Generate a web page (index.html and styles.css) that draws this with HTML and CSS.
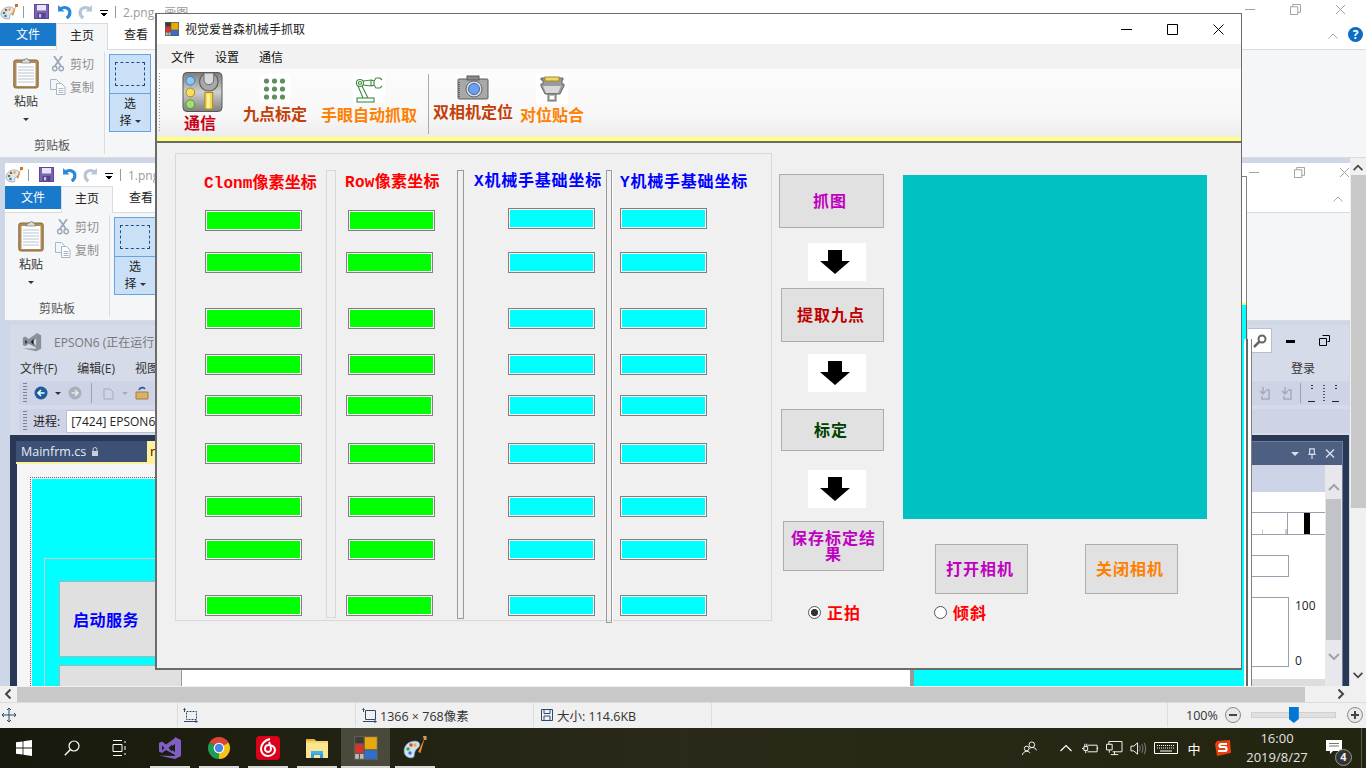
FILE: index.html
```html
<!DOCTYPE html>
<html lang="zh-CN">
<head>
  <meta charset="UTF-8">
  <title>视觉爱普森机械手抓取</title>
  <link rel="stylesheet" href="styles.css">
</head>
<body>

  <!-- Iconos reutilizados -->
  <svg class="defs" xmlns="http://www.w3.org/2000/svg">
    <symbol id="i-paint" viewBox="0 0 18 18">
      <path d="M1 11c0-4 4-7 8-7 4 0 6 2 5 5-1 2-3 1-4 3s1 4-2 4c-4 0-7-2-7-5z" fill="#dfe8ee" stroke="#7f97a8" stroke-width=".7"/>
      <circle cx="4" cy="10" r="1.300" fill="#3c8f3c"/><circle cx="6" cy="7" r="1.300" fill="#d94040"/><circle cx="9.500" cy="6.500" r="1.300" fill="#e0b030"/><circle cx="5.500" cy="13" r="1.300" fill="#3b78c8"/>
      <path d="M16.500 1l-5 11 1.800.8z" fill="#e88a2c"/><path d="M15 1h3v3h-3z" fill="#c9742a"/>
    </symbol>
    <symbol id="i-save" viewBox="0 0 15 15">
      <rect x=".5" y=".5" width="14" height="14" fill="#7a62b8" stroke="#5c4796"/>
      <rect x="3" y="1" width="9" height="5.500" fill="#e9e6f2"/><rect x="3.500" y="9" width="8" height="5.500" fill="#56458c"/><rect x="5" y="10" width="2.200" height="3.500" fill="#c9c3dc"/>
    </symbol>
    <symbol id="i-undo" viewBox="0 0 14 14">
      <path d="M1 1v6h6z" fill="currentColor"/><path d="M3 5c3-3 9-2 9 3 0 2-1 4-3 5" fill="none" stroke="currentColor" stroke-width="3"/>
    </symbol>
    <symbol id="i-clip" viewBox="0 0 26 32">
      <rect x=".8" y="3" width="24.400" height="28" rx="2" fill="#b08a58" stroke="#8a6a3c"/>
      <rect x="3.500" y="6" width="19" height="23" fill="#fff"/>
      <path d="M5 10h16M5 13h16M5 16h16M5 19h16M5 22h16M5 25h16" stroke="#b9c4d2"/>
      <path d="M8 6l2-3h2a1.500 1.500 0 0 1 3 0h1l2 3z" fill="#dcdcdc" stroke="#666" stroke-width=".6"/>
    </symbol>
    <symbol id="i-cut" viewBox="0 0 12 16">
      <path d="M2 0l7 10M10 0L3 10" stroke="#9aa8bb" stroke-width="1.800" fill="none"/>
      <circle cx="2.800" cy="12.500" r="2.200" fill="none" stroke="#9aa8bb" stroke-width="1.400"/><circle cx="9.200" cy="12.500" r="2.200" fill="none" stroke="#9aa8bb" stroke-width="1.400"/>
    </symbol>
    <symbol id="i-copy" viewBox="0 0 16 16">
      <path d="M.5.5h6l3 3v7h-9z" fill="#f2f5f9" stroke="#a9b6c6"/><path d="M6.500 4.500h5l3.500 3.500v7.500h-8.500z" fill="#fff" stroke="#a9b6c6"/><path d="M8.500 9.500h5M8.500 11.500h5M8.500 13.500h5" stroke="#a9b6c6"/>
    </symbol>
    <symbol id="i-tile" viewBox="0 0 20 20">
      <rect width="20" height="20" fill="#5c5c50"/>
      <rect x="9" y="1" width="10" height="10" fill="#e9a80e"/><rect x="9" y="12" width="10" height="7" fill="#2f6fd0"/>
      <rect x="1" y="7" width="7" height="7" fill="#d8332e"/><rect x="1" y="1" width="7" height="5" fill="#3c3c34"/><rect x="1" y="15" width="3" height="4" fill="#bbb"/><rect x="5" y="15" width="3" height="4" fill="#bbb"/>
    </symbol>
    <symbol id="i-arrow" viewBox="0 0 30 24">
      <path d="M8 0h14v11h8L15 24 0 11h8z" fill="#000"/>
    </symbol>
    <symbol id="i-vs" viewBox="0 0 24 24">
      <path d="M17 1l6 3v16l-6 3L1 19.500l16 .5V1z" fill="currentColor"/>
      <path d="M1 7l3-1.500 4 3L17 2v6l-6 4 6 4v3l-9-5-4 3-3-1.500z" fill="currentColor"/>
      <path d="M4 9.500v5l2.500-2.500zM14 8.500L10.500 12l3.500 3.500z" fill="#1d2113"/>
    </symbol>
  </svg>

  <div class="workspace">

    <!-- Ventana de fondo: 2.png -->
    <div class="paint paint-top">
      <div class="paint-title">
        <svg class="ic-paint"><use href="#i-paint"/></svg>
        <i class="qa-sep"></i>
        <svg class="ic-qa"><use href="#i-save"/></svg>
        <svg class="ic-qa undo"><use href="#i-undo"/></svg>
        <svg class="ic-qa redo"><use href="#i-undo"/></svg>
        <span class="qa-drop"></span>
        <i class="qa-sep"></i>
        <span class="doc-name">2.png - 画图</span>
        <span class="win-btns">
          <svg class="wb" viewBox="0 0 12 12"><path d="M0 6h11" stroke="#999"/></svg>
          <svg class="wb" viewBox="0 0 12 12"><path d="M.5 3h8v8.500h-8zM3 3V.500h8.500V9H8.500" fill="none" stroke="#999"/></svg>
          <svg class="wb" viewBox="0 0 12 12"><path d="M1 1l10 10M11 1L1 11" stroke="#999"/></svg>
        </span>
      </div>
      <div class="paint-tabs">
        <span class="tab tab-file">文件</span>
        <span class="tab tab-on">主页</span>
        <span class="tab tab-view">查看</span>
        <svg class="rib-chevron" viewBox="0 0 10 6"><path d="M.5 5.500L5 1l4.500 4.500" fill="none" stroke="#aaa"/></svg>
        <span class="rib-help">?</span>
      </div>
      <div class="ribbon">
        <div class="rib-group">
          <div class="rib-row">
            <div class="paste">
              <svg class="ic-clip"><use href="#i-clip"/></svg>
              <span>粘贴</span>
              <b class="caret"></b>
            </div>
            <div class="cut-copy">
              <span><svg class="ic-sm"><use href="#i-cut"/></svg>剪切</span>
              <span><svg class="ic-sm"><use href="#i-copy"/></svg>复制</span>
            </div>
          </div>
          <div class="rib-label">剪贴板</div>
        </div>
        <div class="select-btn">
          <div class="select-top"><i></i></div>
          <div class="select-low">选<br>择 <b class="caret"></b></div>
        </div>
      </div>
    </div>

    <!-- Ventana de fondo: 1.png -->
    <div class="paint paint-second">
      <div class="paint-title">
        <svg class="ic-paint"><use href="#i-paint"/></svg>
        <i class="qa-sep"></i>
        <svg class="ic-qa"><use href="#i-save"/></svg>
        <svg class="ic-qa undo"><use href="#i-undo"/></svg>
        <svg class="ic-qa redo"><use href="#i-undo"/></svg>
        <span class="qa-drop"></span>
        <i class="qa-sep"></i>
        <span class="doc-name">1.png - 画图</span>
        <span class="win-btns">
          <svg class="wb" viewBox="0 0 12 12"><path d="M0 6h11" stroke="#999"/></svg>
          <svg class="wb" viewBox="0 0 12 12"><path d="M.5 3h8v8.500h-8zM3 3V.500h8.500V9H8.500" fill="none" stroke="#999"/></svg>
          <svg class="wb" viewBox="0 0 12 12"><path d="M1 1l10 10M11 1L1 11" stroke="#999"/></svg>
        </span>
      </div>
      <div class="paint-tabs">
        <span class="tab tab-file">文件</span>
        <span class="tab tab-on">主页</span>
        <span class="tab tab-view">查看</span>
        <svg class="rib-chevron" viewBox="0 0 10 6"><path d="M.5 5.500L5 1l4.500 4.500" fill="none" stroke="#aaa"/></svg>
      </div>
      <div class="ribbon">
        <div class="rib-group">
          <div class="rib-row">
            <div class="paste">
              <svg class="ic-clip"><use href="#i-clip"/></svg>
              <span>粘贴</span>
              <b class="caret"></b>
            </div>
            <div class="cut-copy">
              <span><svg class="ic-sm"><use href="#i-cut"/></svg>剪切</span>
              <span><svg class="ic-sm"><use href="#i-copy"/></svg>复制</span>
            </div>
          </div>
          <div class="rib-label">剪贴板</div>
        </div>
        <div class="select-btn">
          <div class="select-top"><i></i></div>
          <div class="select-low">选<br>择 <b class="caret"></b></div>
        </div>
      </div>
    </div>

    <!-- Visual Studio -->
    <div class="vs">
      <div class="vs-head">
        <div class="vs-title">
          <svg class="vs-logo"><use href="#i-vs"/></svg>
          <span>EPSON6 (正在运行)</span>
          <span class="vs-search">
            <svg viewBox="0 0 14 14"><circle cx="9" cy="5" r="3.500" fill="none" stroke="#666" stroke-width="2"/><path d="M6.500 7.500L1 13" stroke="#666" stroke-width="2.500"/></svg>
          </span>
          <b class="vs-min"></b>
          <svg class="vs-rest" viewBox="0 0 11 11"><path d="M3.500.5h7v6h-2M.5 3.500h7v7h-7z" fill="#d6dbe9" stroke="#000"/></svg>
        </div>
        <div class="vs-menu">
          <span>文件(F)</span><span>编辑(E)</span><span>视图</span>
          <span class="vs-login">登录</span>
        </div>
        <div class="vs-tools">
          <i class="grip"></i>
          <svg viewBox="0 0 14 14"><circle cx="7" cy="7" r="6.500" fill="#1b5d9c"/><path d="M10.500 7h-6M7 4L4 7l3 3" fill="none" stroke="#fff" stroke-width="1.600"/></svg>
          <b class="mini-caret"></b>
          <svg viewBox="0 0 14 14"><circle cx="7" cy="7" r="6.500" fill="#aab0ba"/><path d="M3.500 7h6M7 4l3 3-3 3" fill="none" stroke="#e8e8e8" stroke-width="1.600"/></svg>
          <i class="tool-sep"></i>
          <svg viewBox="0 0 14 14"><path d="M3 3h6l3 3v7H3z" fill="none" stroke="#a6abb8"/></svg>
          <b class="mini-caret pale"></b>
          <svg viewBox="0 0 14 14"><path d="M1 6h12v7H1z" fill="#d9b26a" stroke="#a27f3a"/><path d="M4 4c1-3 5-3 6-1" fill="none" stroke="#1b5d9c" stroke-width="1.600"/></svg>
          <span class="vs-tools-right">
            <svg viewBox="0 0 14 14"><path d="M6 1v7M3 5l3 3 3-3M9 4h3v9H5v-3" fill="none" stroke="#a6abb8" stroke-width="1.500"/></svg>
            <svg class="second-down" viewBox="0 0 14 14"><path d="M6 1v7M3 5l3 3 3-3M9 4h3v9H5v-3" fill="none" stroke="#a6abb8" stroke-width="1.500"/></svg>
            <i class="tool-sep"></i>
            <em class="tick"></em><em class="tick dim"></em><em class="tick"></em>
          </span>
        </div>
        <div class="vs-proc">
          <i class="grip"></i>
          <span>进程:</span>
          <span class="proc-box">[7424] EPSON6</span>
        </div>
      </div>
      <div class="vs-dark">
        <div class="doc-tabs">
          <span class="doc-tab">Mainfrm.cs<svg viewBox="0 0 8 10"><path d="M2 4V2.500a2 2 0 0 1 4 0V4" fill="none" stroke="#ccd"/><rect x="1" y="4" width="6" height="5" fill="#ccd"/></svg></span>
          <span class="doc-tab2">r</span>
        </div>
        <div class="doc-pane">
          <div class="form-shot">
            <div class="inner-frame">
              <div class="old-btn"><span>启动服务</span></div>
              <div class="old-btn low"></div>
            </div>
            <div class="white-panel"></div>
          </div>
        </div>
        <div class="side-panel">
          <div class="side-head">
            <b class="side-caret"></b>
            <svg viewBox="0 0 10 12"><path d="M2.500 1h5v6h-5zM1 7h8M5 7v5" fill="none" stroke="#dde" stroke-width="1.300"/></svg>
            <svg viewBox="0 0 10 10"><path d="M1 1l8 8M9 1L1 9" stroke="#dde" stroke-width="1.400"/></svg>
          </div>
          <div class="side-body">
            <div class="side-main">
              <div class="side-band"></div>
              <div class="side-ruler"><i></i></div>
              <div class="side-box"></div>
              <div class="side-level"><div class="side-graph"></div><div class="side-nums"><span>100</span><span>0</span></div></div>
            </div>
            <div class="side-scroll">
              <svg viewBox="0 0 12 8"><path d="M1 7l5-5 5 5" fill="none" stroke="#9fa3ad" stroke-width="2"/></svg>
              <i></i>
              <svg viewBox="0 0 12 8"><path d="M1 1l5 5 5-5" fill="none" stroke="#9fa3ad" stroke-width="2"/></svg>
            </div>
          </div>
        </div>
      </div>
    </div>

    <!-- Restos de otra ventana detras del formulario -->
    <div class="ghost ghost-up"></div>
    <div class="ghost ghost-mid"></div>
    <div class="ghost ghost-low"></div>

    <div class="vscroll">
      <svg viewBox="0 0 12 8"><path d="M1 7l5-5 5 5" fill="none" stroke="#444" stroke-width="2"/></svg>
      <i></i>
      <svg viewBox="0 0 12 8"><path d="M1 1l5 5 5-5" fill="none" stroke="#444" stroke-width="2"/></svg>
    </div>

    <!-- Formulario principal -->
    <div class="form-win">
      <div class="form-title">
        <svg class="form-ico"><use href="#i-tile"/></svg>
        <span>视觉爱普森机械手抓取</span>
        <span class="form-btns">
          <svg viewBox="0 0 11 11"><path d="M0 5.500h11" stroke="#000"/></svg>
          <svg viewBox="0 0 11 11"><path d="M.5.5h10v10H.5z" fill="none" stroke="#000"/></svg>
          <svg viewBox="0 0 11 11"><path d="M.5.5l10 10M10.500.5l-10 10" stroke="#000"/></svg>
        </span>
      </div>
      <div class="form-menu"><span>文件</span><span>设置</span><span>通信</span></div>
      <div class="form-tools">
        <i class="tools-grip"></i>
        <div class="tool tool-comm">
          <svg class="t-comm" viewBox="0 0 41 41">
            <defs>
              <linearGradient id="gr-comm" x1="0" y1="0" x2="0" y2="1"><stop offset="0" stop-color="#7c7c7c"/><stop offset=".5" stop-color="#cfcfcf"/><stop offset="1" stop-color="#7f7f7f"/></linearGradient>
            </defs>
            <rect x=".5" y=".5" width="40" height="40" rx="4" fill="url(#gr-comm)" stroke="#555"/>
            <circle cx="8" cy="9" r="4.500" fill="#8cc6f2" stroke="#3a7db8"/>
            <circle cx="8" cy="21" r="4.500" fill="#f7dc60" stroke="#a58a20"/>
            <circle cx="8" cy="33" r="4.500" fill="#9fe070" stroke="#559030"/>
            <circle cx="27" cy="10" r="9.500" fill="#a8a8a8" stroke="#5c5c5c" stroke-width="1.200"/>
            <path d="M22 1v7a5 5 0 0 0 10 0V1z" fill="#dadada" stroke="#666"/>
            <rect x="23" y="21" width="8" height="17" fill="#f8d848" stroke="#a58a20"/>
            <rect x="25" y="22" width="3" height="15" fill="#fff3a8"/>
          </svg>
          <span class="t-red t-comm-label">通信</span>
        </div>
        <div class="tool tool-nine">
          <svg class="t-box" viewBox="0 0 31 29">
            <rect width="31" height="29" fill="#fff"/>
            <g fill="#5f8f5f">
              <circle cx="7" cy="7" r="2.600"/><circle cx="15" cy="7" r="2.600"/><circle cx="23" cy="7" r="2.600"/>
              <circle cx="7" cy="15" r="2.600"/><circle cx="15" cy="15" r="2.600"/><circle cx="23" cy="15" r="2.600"/>
              <circle cx="7" cy="23" r="2.600"/><circle cx="15" cy="23" r="2.600"/><circle cx="23" cy="23" r="2.600"/>
            </g>
          </svg>
          <span class="t-rust">九点标定</span>
        </div>
        <div class="tool tool-hand">
          <svg class="t-box" viewBox="0 0 32 29">
            <rect width="32" height="29" fill="#fff"/>
            <g fill="none" stroke="#3f8a3f" stroke-width="1.100">
              <circle cx="7" cy="9" r="3.500"/><circle cx="7" cy="9" r="1.500"/>
              <path d="M10 7l8-1v6l-8-1M18 6l3 1v4l-3 1"/>
              <path d="M21 7l2-3h4l2 2M21 11l2 3h4l2-2"/>
              <path d="M5 12l5 12M9 12l6 12"/>
              <rect x="4" y="24" width="17" height="4"/>
            </g>
          </svg>
          <span class="t-orange">手眼自动抓取</span>
        </div>
        <i class="tool-line"></i>
        <div class="tool tool-cam">
          <svg class="t-cam" viewBox="0 0 34 25">
            <rect width="34" height="25" fill="#fff"/>
            <rect x="2" y="4" width="30" height="20" rx="1" fill="#a8a8a8" stroke="#5a5a5a"/>
            <rect x="11" y="1" width="12" height="4" fill="#8a8a8a" stroke="#5a5a5a"/>
            <circle cx="18" cy="14" r="8" fill="#ddd" stroke="#666"/>
            <circle cx="18" cy="14" r="5.500" fill="#6fa0f0" stroke="#3868b8"/>
            <path d="M3 7v15" stroke="#666" stroke-dasharray="1 1" stroke-width="2"/>
          </svg>
          <span class="t-rust">双相机定位</span>
        </div>
        <div class="tool tool-port">
          <svg class="t-box" viewBox="0 0 32 30">
            <rect width="32" height="30" fill="#fff"/>
            <path d="M5 4h22v2h-1v4h2v2l-4 8H9l-4-8v-2h2V6H5z" fill="#9a9a9a" stroke="#666"/>
            <rect x="9" y="3" width="14" height="4" fill="#f0d870" stroke="#a58a20"/>
            <path d="M7 12h18l-3 7H10z" fill="#d8d8d8"/>
            <rect x="12" y="20" width="8" height="7" fill="#bbb" stroke="#666"/>
            <rect x="14" y="22" width="4" height="3" fill="#fff"/>
          </svg>
          <span class="t-orange">对位贴合</span>
        </div>
      </div>
      <div class="form-rule"></div>

      <div class="form-body">
        <!-- Tabla de coordenadas -->
        <div class="coord-group">
          <i class="vbar bar-1"></i>
          <i class="vbar bar-2"></i>
          <i class="vbar bar-3"></i>

          <div class="col-title c1 red t-clonm">Clonm像素坐标</div>
          <div class="col-title c2 red t-row">Row像素坐标</div>
          <div class="col-title c3 blue t-x">X机械手基础坐标</div>
          <div class="col-title c4 blue t-y">Y机械手基础坐标</div>

          <div class="field green c1 down"></div><div class="field green c2 down"></div><div class="field cyan c3"></div><div class="field cyan c4"></div>
          <div class="field green c1"></div><div class="field green c2 left"></div><div class="field cyan c3"></div><div class="field cyan c4"></div>
          <div class="field green c1"></div><div class="field green c2"></div><div class="field cyan c3"></div><div class="field cyan c4"></div>
          <div class="field green c1"></div><div class="field green c2"></div><div class="field cyan c3"></div><div class="field cyan c4"></div>
          <div class="field green c1"></div><div class="field green c2 left"></div><div class="field cyan c3"></div><div class="field cyan c4"></div>
          <div class="field green c1"></div><div class="field green c2"></div><div class="field cyan c3"></div><div class="field cyan c4"></div>
          <div class="field green c1"></div><div class="field green c2"></div><div class="field cyan c3"></div><div class="field cyan c4"></div>
          <div class="field green c1"></div><div class="field green c2"></div><div class="field cyan c3"></div><div class="field cyan c4"></div>
          <div class="field green c1"></div><div class="field green c2 left"></div><div class="field cyan c3"></div><div class="field cyan c4"></div>
        </div>

        <!-- Pasos de calibracion -->
        <div class="steps">
          <button class="btn step-grab purple">抓图</button>
          <div class="arrow-box a1"><svg><use href="#i-arrow"/></svg></div>
          <button class="btn step-nine dred">提取九点</button>
          <div class="arrow-box a2"><svg><use href="#i-arrow"/></svg></div>
          <button class="btn step-cal dgreen">标定</button>
          <div class="arrow-box a3"><svg><use href="#i-arrow"/></svg></div>
          <button class="btn step-save purple">保存标定结果</button>
          <label class="radio r-front"><i class="dot on"></i>正拍</label>
        </div>

        <!-- Camara -->
        <div class="camera">
          <div class="preview"></div>
          <div class="cam-btns">
            <button class="btn cam-btn purple">打开相机</button>
            <button class="btn cam-btn orange">关闭相机</button>
          </div>
          <label class="radio r-tilt"><i class="dot"></i>倾斜</label>
        </div>
      </div>
    </div>
  </div>

  <div class="hscroll">
    <svg viewBox="0 0 8 12"><path d="M6.500 1.500L2 6l4.500 4.500" fill="none" stroke="#444" stroke-width="2"/></svg>
    <i></i>
    <svg viewBox="0 0 8 12"><path d="M1.500 1.500L6 6l-4.500 4.500" fill="none" stroke="#444" stroke-width="2"/></svg>
  </div>

  <div class="status">
    <div class="st st-1">
      <svg viewBox="0 0 14 14"><path d="M7 0v14M0 7h14M5 2l2-2 2 2M5 12l2 2 2-2M2 5L0 7l2 2M12 5l2 2-2 2" fill="none" stroke="#2c4a6e"/></svg>
    </div>
    <div class="st st-2">
      <svg viewBox="0 0 15 15"><path d="M3.500 3.500h10v8h-10z" fill="none" stroke="#2c4a6e" stroke-dasharray="2 1"/><path d="M1.500 4V.5M.5 2l1-1.500L2.500 2M1 13.500h13M12.500 12.500l2 1-2 1" fill="none" stroke="#2c4a6e"/></svg>
    </div>
    <div class="st st-3">
      <svg viewBox="0 0 15 15"><path d="M3.500 2.500h10v9h-10z" fill="none" stroke="#2c4a6e"/><path d="M1.500 4V.5M.5 2l1-1.500L2.500 2M1 13.500h13M12.500 12.500l2 1-2 1" fill="none" stroke="#2c4a6e"/></svg>
      <span>1366 × 768像素</span>
    </div>
    <div class="st st-4">
      <svg viewBox="0 0 12 12"><path d="M.5.5h11v11H.5zM3 .5v4h6v-4M3 11.500V7h6v4.500" fill="none" stroke="#2c4a6e"/></svg>
      <span>大小: 114.6KB</span>
    </div>
    <div class="st st-5"></div>
    <div class="st st-zoom">
      <span>100%</span>
      <svg class="zoom-btn" viewBox="0 0 16 16"><circle cx="8" cy="8" r="7.500" fill="#e8e8e8" stroke="#8a8a8a"/><path d="M4 8h8" stroke="#444" stroke-width="2"/></svg>
      <div class="slider"><i></i></div>
      <svg class="zoom-btn" viewBox="0 0 16 16"><circle cx="8" cy="8" r="7.500" fill="#e8e8e8" stroke="#8a8a8a"/><path d="M4 8h8M8 4v8" stroke="#444" stroke-width="2"/></svg>
    </div>
  </div>

  <div class="taskbar">
    <div class="task nar"><svg viewBox="0 0 16 16"><path d="M0 2.300l6.600-.9v6.200H0zM7.400 1.300L16 0v7.600H7.400zM0 8.400h6.600v6.200L0 13.700zM7.400 8.400H16V16l-8.600-1.300z" fill="#fff"/></svg></div>
    <div class="task nar"><svg viewBox="0 0 16 16"><circle cx="10" cy="6" r="5" fill="none" stroke="#fff" stroke-width="1.200"/><path d="M6.500 9.500L.8 15.200" stroke="#fff" stroke-width="1.400"/></svg></div>
    <div class="task nar"><svg viewBox="0 0 16 16"><path d="M1 .5h9M1 15.500h9M1 4.500h9v7H1zM13 1v2M13 6v4M13 13v2" fill="none" stroke="#fff"/></svg></div>
    <div class="task tvs open"><svg><use href="#i-vs"/></svg></div>
    <div class="task open">
      <svg viewBox="0 0 24 24">
        <path d="M12 12L2.470 6.500A11 11 0 0 1 21.530 6.500z" fill="#dd4438"/>
        <path d="M12 12L21.530 6.500A11 11 0 0 1 12 23z" fill="#f6c21c"/>
        <path d="M12 12L12 23A11 11 0 0 1 2.470 6.500z" fill="#1f9d55"/>
        <circle cx="12" cy="12" r="5.300" fill="#fff"/><circle cx="12" cy="12" r="4.200" fill="#4a86e8"/>
      </svg>
    </div>
    <div class="task open">
      <svg viewBox="0 0 24 24"><rect width="24" height="24" rx="4" fill="#dd001b"/><path d="M14 3c-5 1-9 5-9 10 0 4 3 7 7 7s7-3 7-6-3-5-6-5-4 2-4 4 2 3 3 3 3-1 3-3c0-3-1-5-2-7" fill="none" stroke="#fff" stroke-width="2"/></svg>
    </div>
    <div class="task open">
      <svg viewBox="0 0 24 24"><path d="M1 3h8l2 2h12v17H1z" fill="#f5d76e"/><path d="M1 3h8l2 2H1z" fill="#e0b53c"/><path d="M4 7h19v15H1V7z" fill="#fbe58e"/><path d="M6 22v-6h12v6h-3v-3H9v3z" fill="#2f9ee0"/><rect x="6" y="15" width="12" height="3" fill="#3fb2ee"/></svg>
    </div>
    <div class="task active"><svg><use href="#i-tile"/></svg></div>
    <div class="task open">
      <svg viewBox="0 0 24 24">
        <path d="M1 15c0-6 5-10 11-10 4 0 6 3 4 6-2 2-3 2-4 5s0 6-4 6c-4 0-7-3-7-7z" fill="#cfe2ef" stroke="#5f88a6" stroke-width=".6"/>
        <circle cx="5" cy="13" r="1.700" fill="#38a838"/><circle cx="8" cy="9" r="1.700" fill="#dd4040"/><circle cx="12" cy="9" r="1.700" fill="#e9b530"/><circle cx="7" cy="17" r="1.700" fill="#2f78d0"/>
        <path d="M22 1l-7 15 2.500 1z" fill="#e0862c"/><path d="M20 0h3.500v4H21z" fill="#caa060"/>
      </svg>
    </div>

    <div class="tray">
      <span class="tr-people"><svg viewBox="0 0 16 16"><circle cx="10.500" cy="4" r="3" fill="none" stroke="#fff"/><circle cx="5" cy="8" r="2.500" fill="none" stroke="#fff"/><path d="M.5 15c0-2 2-4 4.500-4s3 1 3.500 2M8 8c1-1 2-1 3-1 2 0 4 1 4.500 3" fill="none" stroke="#fff"/></svg></span>
      <span class="tr-up"><svg viewBox="0 0 12 8"><path d="M.5 7L6 1.500 11.500 7" fill="none" stroke="#fff" stroke-width="1.200"/></svg></span>
      <span class="tr"><svg viewBox="0 0 18 14"><path d="M6 3.500h10v7H6M16.500 6v2M2 5h4v4H2zM0 7h2M3 5V2M5 5V2M4 9v3" fill="none" stroke="#fff"/></svg></span>
      <span class="tr"><svg viewBox="0 0 18 16"><path d="M3 3.500V.5h14v11H7M.5 3.500h6v6h-6zM3.500 9.500v3M9 11.500v3M5 14.500h8" fill="none" stroke="#fff"/></svg></span>
      <span class="tr"><svg viewBox="0 0 18 14"><path d="M1 4.500h3L8 1v12L4 9.500H1z" fill="none" stroke="#fff"/><path d="M10 4c1 2 1 4 0 6M12.500 2.500c1.500 3 1.500 6 0 9M15 1c2 4 2 8 0 12" fill="none" stroke="#888"/></svg></span>
      <span class="tr-keys"><svg viewBox="0 0 24 12"><path d="M.5.5h23v11H.5z" fill="none" stroke="#fff"/><path d="M3 3.500h18M3 6h18" stroke="#fff" stroke-dasharray="1 1"/><path d="M6 9h12" stroke="#fff"/></svg></span>
      <span class="tr-ime">中</span>
      <span class="tr-sogou"><svg viewBox="0 0 16 16"><path d="M2 1l13-1 1 13-14 3-2-12z" fill="#e8400c"/><path d="M12 4H6C4 4 4 7 6 7h4c2 0 2 4 0 4H3" fill="none" stroke="#fff" stroke-width="2.200"/></svg></span>
      <span class="clock"><span>16:00</span><span>2019/8/27</span></span>
      <span class="notif">
        <svg viewBox="0 0 16 16"><path d="M0 0h16v11H7l-3 3v-3H0z" fill="#fff"/><path d="M3 3.500h10M3 6h10" stroke="#777"/></svg>
        <em>4</em>
      </span>
    </div>
    <i class="show-desk"></i>
  </div>

</body>
</html>
```

FILE: styles.css
```css
html, body {
  margin: 0;
  padding: 0;
}

body {
  width: 1366px;
  height: 768px;
  overflow: hidden;
  display: flex;
  flex-direction: column;
  font-family: "Open Sans", "Noto Sans CJK SC", sans-serif;
  font-size: 12px;
  color: #222;
  background: #c9d3e5;
}

.defs {
  position: absolute;
  width: 0;
  height: 0;
}

svg {
  display: block;
}

/* Zona de ventanas: aqui si van colocadas a mano */
.workspace {
  position: relative;
  height: 686px;
  overflow: hidden;
  background: #cdd7e8;
}

.paint {
  position: absolute;
  background: #fff;
}

.paint-top {
  left: 0;
  top: 0;
  width: 1366px;
}

.paint-second {
  left: 5px;
  top: 163px;
  width: 1345px;
}

.paint-title {
  height: 23px;
  display: flex;
  align-items: center;
  background: #fff;
}

.ic-paint {
  width: 18px;
  height: 18px;
}

.qa-sep {
  width: 1px;
  height: 12px;
  margin: 0 10px 0 5px;
  background: #9a9a9a;
}

.ic-qa {
  width: 15px;
  height: 15px;
  margin-right: 8px;
}

.ic-qa.undo {
  color: #2b88d8;
  margin-right: 6px;
}

.ic-qa.redo {
  color: #b6c6d6;
  margin-right: 7px;
  transform: scaleX(-1);
}

.qa-drop {
  width: 8px;
  height: 6px;
  margin: 3px 2px 0 0;
  box-sizing: border-box;
  border-top: 1px solid #000;
  background: linear-gradient(#000, #000) center 2px/6px 1px no-repeat,
              linear-gradient(#000, #000) center 3px/4px 1px no-repeat,
              linear-gradient(#000, #000) center 4px/2px 1px no-repeat;
}

.doc-name {
  color: #9a9a9a;
  margin-left: -3px;
}

.win-btns {
  margin-left: auto;
  display: flex;
  gap: 34px;
  padding-right: 20px;
}

.paint-second .win-btns {
  padding-right: 0;
}

.wb {
  width: 11px;
  height: 11px;
  margin-top: -4px;
}

.paint-tabs {
  height: 26px;
  display: flex;
  align-items: flex-start;
  border-bottom: 1px solid #dadbdc;
  background: #fff;
  position: relative;
}

.tab {
  width: 52px;
  height: 23px;
  line-height: 23px;
  text-align: center;
}

.tab-file {
  width: 56px;
  background: #1979ca;
  color: #fff;
}

.tab-on {
  height: 27px;
  background: #f5f6f7;
  border: 1px solid #dadbdc;
  border-bottom: 0;
  box-sizing: border-box;
  position: relative;
  z-index: 1;
}

.tab-view {
  width: 56px;
}

.rib-chevron {
  position: absolute;
  right: 28px;
  top: 10px;
  width: 10px;
  height: 6px;
}

.paint-second .rib-chevron {
  right: 7px;
}

.rib-help {
  position: absolute;
  left: 1348px;
  top: 4px;
  width: 15px;
  height: 15px;
  line-height: 15px;
  border-radius: 50%;
  background: #0f6cc4;
  color: #fff;
  font-weight: 700;
  text-align: center;
}

.ribbon {
  height: 107px;
  display: flex;
  background: #f5f6f7;
  border-bottom: 1px solid #dadbdc;
}

.rib-group {
  width: 104px;
  border-right: 1px solid #dcdcdc;
  margin: 2px 0 3px;
  display: flex;
  flex-direction: column;
}

.rib-row {
  flex: 1;
  display: flex;
}

.paste {
  width: 52px;
  padding-top: 5px;
  display: flex;
  flex-direction: column;
  align-items: center;
  color: #333;
}

.ic-clip {
  width: 26px;
  height: 32px;
  margin-bottom: 3px;
}

.caret {
  display: inline-block;
  width: 0;
  height: 0;
  border: 3px solid transparent;
  border-top-color: #333;
  border-bottom: 0;
  vertical-align: middle;
}

.paste .caret {
  margin-top: 8px;
}

.cut-copy {
  padding-top: 4px;
  display: flex;
  flex-direction: column;
  gap: 7px;
  color: #8f8f8f;
}

.cut-copy span {
  display: flex;
  align-items: center;
  gap: 4px;
  height: 16px;
  margin-left: -2px;
}

.ic-sm {
  width: 16px;
  height: 16px;
}

.rib-label {
  text-align: center;
  color: #555;
}

.select-btn {
  width: 42px;
  height: 78px;
  margin: 4px 0 0 4px;
  border: 1px solid #64a5e0;
  box-sizing: border-box;
  background: #c9e0f7;
}

.select-top {
  height: 38px;
  border-bottom: 1px solid #64a5e0;
  display: flex;
  justify-content: center;
  align-items: center;
}

.select-top i {
  width: 28px;
  height: 22px;
  border: 1px dashed #1b4f8c;
}

.select-low {
  text-align: center;
  line-height: 17px;
  padding-top: 1px;
}

.vs {
  position: absolute;
  left: 10px;
  top: 325px;
  width: 1339px;
  height: 361px;
  background: #d6dbe9;
}

.vs-head {
  height: 110px;
  position: relative;
}

.vs-title {
  height: 33px;
  display: flex;
  align-items: center;
  color: #777;
  padding-left: 12px;
}

.vs-logo {
  width: 20px;
  height: 20px;
  margin-right: 12px;
  color: #8a8f9a;
}

.vs-search {
  position: absolute;
  right: 77px;
  top: 3px;
  width: 23px;
  height: 23px;
  background: #fff;
  border: 1px solid #b9bfd0;
  border-left: 0;
  display: flex;
  align-items: center;
  justify-content: center;
}

.vs-search svg {
  width: 14px;
  height: 14px;
}

.vs-min {
  position: absolute;
  right: 54px;
  top: 15px;
  width: 9px;
  height: 3px;
  background: #000;
}

.vs-rest {
  position: absolute;
  right: 19px;
  top: 10px;
  width: 11px;
  height: 11px;
}

.vs-menu {
  height: 19px;
  padding-bottom: 4px;
  display: flex;
  align-items: center;
  gap: 20px;
  padding-left: 10px;
  color: #333;
}

.vs-login {
  margin-left: auto;
  margin-right: 34px;
}

.vs-tools {
  height: 24px;
  margin-left: 9px;
  display: flex;
  align-items: center;
  gap: 7px;
  background: #ced4e6;
  position: relative;
}

.vs-tools > svg {
  width: 14px;
  height: 14px;
}

.grip {
  width: 4px;
  height: 20px;
  margin-left: 4px;
  background: repeating-linear-gradient(#7c8294 0 1px, transparent 1px 3px);
}

.mini-caret {
  width: 0;
  height: 0;
  border: 3px solid transparent;
  border-top-color: #333;
  border-bottom: 0;
}

.mini-caret.pale {
  border-top-color: #a6abb8;
}

.tool-sep {
  width: 1px;
  height: 20px;
  margin: 0 2px;
  background: #9aa0b0;
}

.vs-tools-right {
  position: absolute;
  right: 10px;
  top: 0;
  height: 24px;
  display: flex;
  align-items: center;
  gap: 5px;
}

.vs-tools-right svg {
  width: 14px;
  height: 14px;
}

.vs-tools-right .second-down {
  margin-left: 3px;
}

.tick {
  width: 7px;
  height: 16px;
  border-bottom: 1px solid #222;
  background: repeating-linear-gradient(#333 0 1px, transparent 1px 3px) center top/2px 6px no-repeat;
}

.tick.dim {
  background: repeating-linear-gradient(#555 0 1px, transparent 1px 3px) center top/2px 16px no-repeat;
  border-bottom: 0;
}

.vs-proc {
  height: 24px;
  margin: 4px 0 0 9px;
  display: flex;
  align-items: center;
  gap: 6px;
  background: #ced4e6;
}

.proc-box {
  width: 200px;
  height: 21px;
  line-height: 21px;
  padding-left: 4px;
  background: #fff;
  border: 1px solid #b9bfd0;
  white-space: nowrap;
}

.vs-dark {
  height: 251px;
  background: #293955;
  position: relative;
}

.doc-tabs {
  position: absolute;
  left: 6px;
  top: 6px;
  display: flex;
  height: 23px;
  border-bottom: 2px solid #fff29d;
  width: 1235px;
  box-sizing: border-box;
}

.doc-tab {
  width: 131px;
  display: flex;
  align-items: center;
  gap: 5px;
  padding-left: 5px;
  box-sizing: border-box;
  background: #3c5175;
  color: #e4ecf7;
  font-size: 12.5px;
}

.doc-tab svg {
  width: 8px;
  height: 10px;
}

.doc-tab2 {
  width: 20px;
  background: #fff29d;
  color: #600;
  padding-left: 3px;
  line-height: 21px;
  font-size: 13px;
}

.doc-pane {
  position: absolute;
  left: 7px;
  top: 29px;
  width: 1234px;
  height: 222px;
  background: #f5f5f5;
}

.form-shot {
  position: absolute;
  left: 13px;
  top: 13px;
  width: 1218px;
  height: 209px;
  background: #0ff;
  background-clip: content-box;
  border: 1px dotted #666;
  border-bottom: 0;
  padding: 1px 0 0 1px;
}

.inner-frame {
  position: absolute;
  left: 13px;
  top: 80px;
  width: 150px;
  height: 140px;
  border: 1px solid #ccc;
  border-right: 0;
}

.old-btn {
  position: absolute;
  left: 14px;
  top: 22px;
  width: 130px;
  height: 76px;
  background: #e0e0e0;
  border: 1px solid #b0b0b0;
  box-sizing: border-box;
  display: flex;
  align-items: center;
  padding-left: 13px;
  color: #00f;
  font-weight: 700;
  font-size: 16px;
  font-family: "Liberation Serif", "Noto Sans CJK SC", serif;
  letter-spacing: .5px;
}

.old-btn.low {
  top: 106px;
  height: 30px;
}

.white-panel {
  position: absolute;
  left: 150px;
  top: 100px;
  width: 728px;
  height: 120px;
  background: #fff;
  border-left: 1px solid #999;
  border-right: 4px solid #999;
}

.side-panel {
  position: absolute;
  left: 1241px;
  top: 6px;
  width: 92px;
  height: 245px;
  border: 1px solid #6c7c9c;
  border-bottom: 0;
  border-left: 0;
  box-sizing: border-box;
}

.side-head {
  height: 23px;
  background: #4d6082;
  display: flex;
  align-items: center;
  justify-content: flex-end;
  gap: 8px;
  padding-right: 7px;
}

.side-head svg {
  width: 10px;
  height: 11px;
}

.side-caret {
  width: 0;
  height: 0;
  border: 4px solid transparent;
  border-top-color: #dde;
  border-bottom: 0;
}

.side-body {
  height: 221px;
  display: flex;
  background: linear-gradient(#fff 214px, #ddd 214px);
}

.side-main {
  flex: 1;
  min-width: 0;
}

.side-band {
  height: 27px;
  background: #ced4e8;
}

.side-ruler {
  height: 21px;
  margin-top: 20px;
  border-top: 1px solid #9aa0b0;
  border-bottom: 1px solid #9aa0b0;
  display: flex;
  justify-content: flex-end;
  background: linear-gradient(#ccc, #ccc) 11px bottom/1px 5px no-repeat,
              linear-gradient(#ccc, #ccc) 34px bottom/2px 5px no-repeat;
}

.side-ruler i {
  width: 6px;
  background: #000;
  margin-right: 15px;
  box-shadow: -16px 0 0 #fff, -17px 0 0 #9aa0b0;
}

.side-box {
  width: 37px;
  height: 20px;
  margin-top: 20px;
  border: 1px solid #9aa0b0;
  border-left: 0;
}

.side-level {
  display: flex;
  margin-top: 20px;
}

.side-graph {
  width: 37px;
  height: 68px;
  border: 1px solid #9aa0b0;
  border-left: 0;
}

.side-nums {
  height: 72px;
  margin-left: 6px;
  display: flex;
  flex-direction: column;
  justify-content: space-between;
}

.side-scroll {
  width: 17px;
  background: #e8e8ec;
  display: flex;
  flex-direction: column;
  align-items: center;
  padding-top: 18px;
}

.side-scroll svg {
  width: 12px;
  height: 8px;
  flex: none;
}

.side-scroll i {
  width: 15px;
  height: 141px;
  margin: 8px 0 13px;
  background: #c2c3c9;
}

.ghost {
  position: absolute;
}

.ghost-up {
  left: 1242px;
  top: 176px;
  width: 4px;
  height: 128px;
  background: #fff;
  border-right: 1px solid #808080;
  border-top: 1px solid #808080;
  box-shadow: inset 0 -3px 0 #fff88a;
}

.ghost-mid {
  left: 1242px;
  top: 305px;
  width: 4px;
  height: 381px;
  background: #0ff;
  border-right: 1px solid #666;
}

.ghost-low {
  left: 1244px;
  top: 339px;
  width: 8px;
  height: 347px;
  box-sizing: border-box;
  background: linear-gradient(90deg, #fff 2px, #666 2px 4px, #fff 4px);
  border-right: 1px solid #808080;
}

.vscroll {
  position: absolute;
  left: 1350px;
  top: 158px;
  width: 16px;
  height: 528px;
  background: #f0f0f0;
  display: flex;
  flex-direction: column;
  align-items: center;
  padding-top: 6px;
  box-sizing: border-box;
}

.vscroll svg {
  width: 12px;
  height: 7px;
  flex: none;
}

.vscroll i {
  width: 15px;
  height: 333px;
  margin: 4px 0 164px;
  background: #c8c8c8;
}

/* Formulario principal */
.form-win {
  position: absolute;
  left: 155px;
  top: 13px;
  width: 1087px;
  height: 657px;
  box-sizing: border-box;
  border: 2px solid #6b6b6b;
  border-top-width: 1px;
  border-right-width: 1px;
  background: #f0f0f0;
  display: flex;
  flex-direction: column;
}

.form-title {
  height: 30px;
  flex: none;
  display: flex;
  align-items: center;
  background: #fff;
  padding-left: 8px;
}

.form-ico {
  width: 14px;
  height: 14px;
  margin-right: 6px;
}

.form-btns {
  margin-left: auto;
  display: flex;
  gap: 35px;
  padding-right: 17px;
}

.form-btns svg {
  width: 11px;
  height: 11px;
}

.form-menu {
  height: 25px;
  flex: none;
  display: flex;
  align-items: center;
  gap: 20px;
  padding-left: 14px;
  background: #f2f2f2;
  color: #111;
}

.form-tools {
  height: 68px;
  flex: none;
  display: flex;
  align-items: flex-start;
  background: linear-gradient(#fcfcfc, #f7f7f7 70%, #ececec);
  font-family: "Noto Sans CJK SC", sans-serif;
  font-weight: 700;
  font-size: 16px;
  white-space: nowrap;
}

.tools-grip {
  width: 1px;
  height: 60px;
  margin: 4px 0 0 2px;
  background: repeating-linear-gradient(#999 0 1px, transparent 1px 3px);
}

.tool {
  display: flex;
  flex-direction: column;
  align-items: center;
  line-height: 20px;
}

.tool-comm {
  margin: 3px 0 0 22px;
  width: 41px;
}

.t-comm {
  width: 41px;
  height: 40px;
}

.t-comm-label {
  margin-left: -5px;
}

.tool-nine {
  width: 64px;
  margin: 5px 0 0 20px;
}

.tool-nine .t-box {
  margin-bottom: 0;
}

.tool-hand {
  width: 96px;
  margin: 5px 0 0 14px;
}

.t-box {
  width: 32px;
  height: 29px;
  margin-bottom: 1px;
}

.tool-line {
  width: 1px;
  height: 60px;
  margin: 5px 0 0 11px;
  background: #aaa;
}

.tool-cam {
  width: 80px;
  margin: 6px 0 0 4px;
}

.t-cam {
  width: 34px;
  height: 25px;
  margin-bottom: 1px;
}

.tool-port {
  width: 64px;
  margin: 5px 0 0 7px;
}

.tool-port .t-box {
  height: 30px;
  margin-bottom: 0;
}

.t-red { color: #c80018; }
.t-rust { color: #c23f08; }
.t-orange { color: #ff8000; }

.form-rule {
  height: 6px;
  flex: none;
  background: #ffff80;
  border-bottom: 2px solid #6b6b6b;
  box-sizing: border-box;
}

.form-body {
  flex: 1;
  display: flex;
  align-items: flex-start;
  padding: 10px 0 0 18px;
  font-family: "Liberation Serif", "Noto Sans CJK SC", serif;
  font-weight: 700;
  font-size: 16px;
  letter-spacing: 1px;
}

/* Tabla */
.coord-group {
  width: 597px;
  height: 468px;
  flex: none;
  box-sizing: border-box;
  border: 1px solid #d8d8d8;
  display: grid;
  grid-template-columns: 150px 10px 121px 7px 142px 6px 1fr;
  grid-template-rows: 54px 44px 56px 46px 41px 48px 53px 43px 56px 1fr;
  justify-items: start;
  align-items: start;
}

.vbar {
  grid-row: 1 / -1;
  width: 100%;
  box-sizing: border-box;
  margin-top: 16px;
  height: 448px;
  border: 1px solid #d8d8d8;
}

.bar-1 { grid-column: 2; }

.bar-2 {
  grid-column: 4;
  border-color: #9a9a9a;
  height: 449px;
}

.bar-3 {
  grid-column: 6;
  border-color: #9a9a9a;
  box-shadow: 1px 0 0 #fff;
  height: 453px;
}

.col-title {
  white-space: nowrap;
  margin-top: 19px;
  line-height: 20px;
  font-family: "Liberation Mono", "Noto Sans CJK SC", monospace;
  letter-spacing: .8px;
}

.t-clonm { margin-top: 20px; letter-spacing: .1px; }
.t-row { letter-spacing: .3px; }
.t-x { margin-top: 18px; }

.c1 { grid-column: 1; margin-left: 29px; }
.c2 { grid-column: 3; margin-left: 12px; }
.c3 { grid-column: 5; margin-left: 44px; }
.c4 { grid-column: 7; margin-left: 8px; }

.col-title.c1 { margin-left: 28px; }
.col-title.c2 { margin-left: 9px; }
.col-title.c3 { margin-left: 10px; }

.field {
  width: 87px;
  height: 21px;
  box-sizing: border-box;
  border: 1px solid #808080;
  box-shadow: inset 0 0 0 1px #fff;
}

.field.c1 { width: 97px; }
.field.left { margin-left: 10px; }
.field.down { margin-top: 2px; }

.green { background: #0f0; }
.cyan { background: #0ff; }

.red { color: #f00; }
.blue { color: #00f; }
.purple { color: #c000c0; }
.dred { color: #c00000; }
.dgreen { color: #004000; }
.orange { color: #ff8000; }

/* Botones */
.btn {
  display: block;
  padding: 2px 3px 0 0;
  background: #e1e1e1;
  border: 1px solid #adadad;
  font: inherit;
  letter-spacing: 1px;
  line-height: 16px;
}

.steps {
  width: 105px;
  margin: 21px 0 0 7px;
  flex: none;
  display: flex;
  flex-direction: column;
  align-items: flex-end;
}

.step-grab { width: 105px; height: 54px; }
.step-nine { width: 103px; height: 54px; margin-top: 7px; }
.step-cal { width: 103px; height: 42px; margin-top: 17px; }
.step-save { width: 101px; height: 50px; margin-top: 13px; padding: 2px 6px 0; }

.arrow-box {
  width: 58px;
  height: 38px;
  margin-right: 18px;
  padding-right: 4px;
  box-sizing: border-box;
  background: #fff;
  display: flex;
  align-items: center;
  justify-content: center;
}

.arrow-box svg {
  width: 30px;
  height: 24px;
}

.a1 { margin-top: 15px; }
.a2 { margin-top: 12px; }
.a3 { margin-top: 19px; }

.radio {
  display: flex;
  align-items: center;
  gap: 6px;
  height: 18px;
  color: #f00;
  white-space: nowrap;
}

.dot {
  width: 13px;
  height: 13px;
  box-sizing: border-box;
  border-radius: 50%;
  border: 1px solid #555;
  background: #fff;
}

.dot.on {
  background: radial-gradient(circle, #333 0 3.400px, #fff 3.800px);
}

.r-front {
  align-self: flex-start;
  margin: 32px 0 0 29px;
}

.camera {
  width: 304px;
  margin: 22px 0 0 19px;
  flex: none;
}

.preview {
  height: 344px;
  background: #00c2c2;
}

.cam-btns {
  display: flex;
  gap: 57px;
  margin: 25px 0 0 32px;
}

.cam-btn {
  width: 93px;
  height: 50px;
}

.r-tilt {
  margin: 9px 0 0 31px;
}

/* Barras inferiores */
.hscroll {
  height: 17px;
  flex: none;
  display: flex;
  align-items: center;
  background: #f0f0f0;
  box-sizing: border-box;
  border-bottom: 1px solid #dcdcdc;
}

.hscroll svg {
  width: 8px;
  height: 12px;
  flex: none;
  margin: 0 5px 0 4px;
}

.hscroll svg:last-child {
  margin: 0 21px 0 32px;
}

.hscroll i {
  width: 1288px;
  height: 15px;
  background: #c8c8c8;
}

.status {
  height: 25px;
  flex: none;
  display: flex;
  background: #f0f0f0;
  color: #333;
  font-size: 12.5px;
}

.st {
  height: 24px;
  flex: none;
  display: flex;
  align-items: center;
  box-sizing: border-box;
  border-right: 1px solid #dcdcdc;
  padding-left: 5px;
  gap: 4px;
}

.st svg {
  width: 15px;
  height: 15px;
  flex: none;
}

.st-1 { width: 178px; padding-left: 2px; }
.st-1 svg { width: 14px; height: 14px; }
.st-2 { width: 178px; }
.st-3 { width: 178px; padding-left: 6px; gap: 3px; }
.st-4 { width: 178px; padding-left: 7px; }
.st-4 svg { width: 12px; height: 12px; }
.st-5 { width: 456px; }

.st-zoom {
  width: 199px;
  border-right: 0;
  padding-left: 18px;
  gap: 7px;
}

.st .zoom-btn {
  width: 16px;
  height: 16px;
}

.slider {
  position: relative;
  width: 85px;
  height: 6px;
  box-sizing: border-box;
  margin: 0 4px 0 3px;
  background: #e0e0e0;
  border: 1px solid #d0d0d0;
}

.slider i {
  position: absolute;
  left: 37px;
  top: -6px;
  width: 10px;
  height: 16px;
  background: #0078d7;
  clip-path: polygon(0 0, 100% 0, 100% 75%, 50% 100%, 0 75%);
}

.taskbar {
  height: 40px;
  flex: none;
  display: flex;
  position: relative;
  background: linear-gradient(90deg, #17190c, #2b2a1a 50%, #22250f 100%);
  color: #e8e8e8;
}

.task {
  position: relative;
  width: 49px;
  height: 40px;
  display: flex;
  align-items: center;
  justify-content: center;
}

.task.nar {
  width: 48px;
}

.task svg {
  width: 24px;
  height: 24px;
}

.task.nar svg {
  width: 16px;
  height: 16px;
}

.task.tvs {
  margin-left: 1px;
  color: #7f5fc4;
}

.task.open::after {
  content: "";
  position: absolute;
  left: 5px;
  right: 4px;
  bottom: 0;
  height: 2px;
  background: #d8d8d8;
}

.task.active {
  background: #4a4a3c;
}

.task.active::after {
  content: "";
  position: absolute;
  left: 0;
  right: 0;
  bottom: 0;
  height: 2px;
  background: #d8d8d8;
}

.tray {
  position: absolute;
  left: 1010px;
  top: 0;
  height: 40px;
  display: flex;
  align-items: center;
}

.tray > span {
  display: flex;
  align-items: center;
  justify-content: center;
  flex: none;
}

.tr-people { width: 38px; }
.tr-people svg { width: 15px; height: 15px; }
.tr-up { width: 24px; margin-left: 6px; }
.tr-up svg { width: 12px; height: 8px; }
.tr { width: 24px; }
.tr svg { width: 17px; height: 15px; }
.tr-keys { width: 32px; }
.tr-keys svg { width: 24px; height: 12px; }
.tr-ime { width: 24px; color: #fff; font-size: 13px; }
.tr-sogou { width: 24px; margin-left: 5px; }
.tr-sogou svg { width: 16px; height: 16px; }

.tray .clock {
  width: 84px;
  flex-direction: column;
  line-height: 19px;
  font-size: 13px;
  color: #e2e2e2;
}

.tray .notif {
  position: relative;
  width: 30px;
}

.notif svg {
  width: 16px;
  height: 16px;
}

.notif em {
  position: absolute;
  left: 16px;
  top: 9px;
  width: 15px;
  height: 15px;
  line-height: 14px;
  border: 1px solid #999;
  border-radius: 50%;
  background: #333;
  text-align: center;
  font-style: normal;
  font-weight: 700;
  font-size: 11px;
  color: #eee;
}

.show-desk {
  position: absolute;
  left: 1361px;
  top: 0;
  width: 1px;
  height: 40px;
  background: #5a5a4a;
}
```
